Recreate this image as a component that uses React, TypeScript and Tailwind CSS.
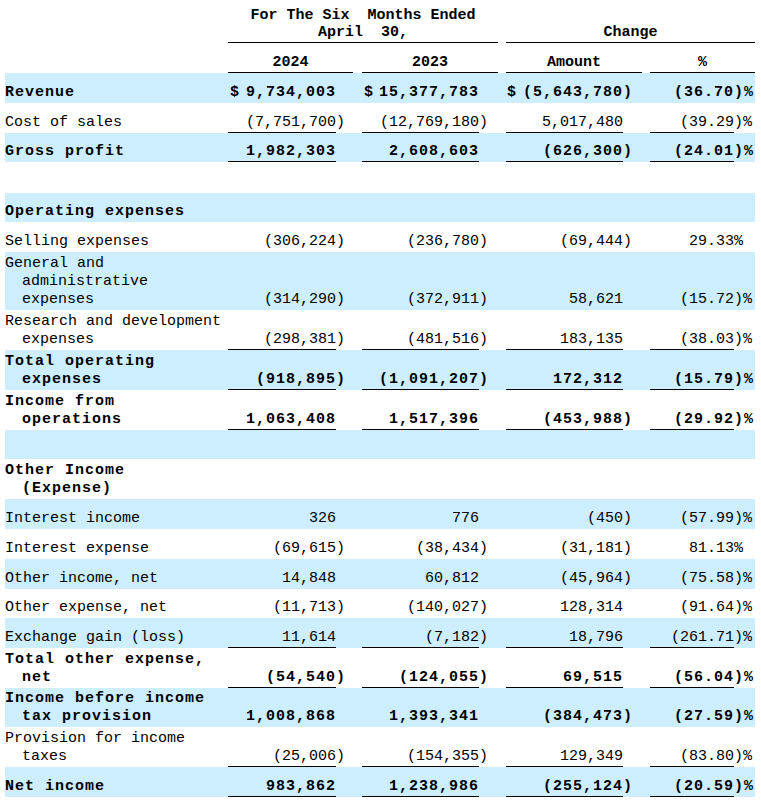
import React from "react";

type Row = {
  label: string[];
  h: string;
  bold?: boolean;
  blue?: boolean;
  line?: boolean;
  vals?: string[];
};

// label | 2024 | ) | gap | 2023 | ) | gap | amount | ) | gap | % | )%
const cols =
  "grid grid-cols-[223px_108px_17px_9px_117px_19px_8px_117px_19px_8px_84px_21px]";

const rows: Row[] = [
  { label: ["Revenue"], h: "h-[30px]", bold: true, blue: true, vals: ["$ 9,734,003", "$ 15,377,783", "$ (5,643,780)", "(36.70)%"] },
  { label: ["Cost of sales"], h: "h-[30px]", line: true, vals: ["(7,751,700)", "(12,769,180)", "5,017,480", "(39.29)%"] },
  { label: ["Gross profit"], h: "h-[29px]", bold: true, blue: true, line: true, vals: ["1,982,303", "2,608,603", "(626,300)", "(24.01)%"] },
  { label: [""], h: "h-[31px]" },
  { label: ["Operating expenses"], h: "h-[29px]", bold: true, blue: true },
  { label: ["Selling expenses"], h: "h-[30px]", vals: ["(306,224)", "(236,780)", "(69,444)", "29.33%"] },
  { label: ["General and", "administrative", "expenses"], h: "h-[58px]", blue: true, vals: ["(314,290)", "(372,911)", "58,621", "(15.72)%"] },
  { label: ["Research and development", "expenses"], h: "h-[40px]", line: true, vals: ["(298,381)", "(481,516)", "183,135", "(38.03)%"] },
  { label: ["Total operating", "expenses"], h: "h-[40px]", bold: true, blue: true, line: true, vals: ["(918,895)", "(1,091,207)", "172,312", "(15.79)%"] },
  { label: ["Income from", "operations"], h: "h-[40px]", bold: true, line: true, vals: ["1,063,408", "1,517,396", "(453,988)", "(29.92)%"] },
  { label: [""], h: "h-[29px]", blue: true },
  { label: ["Other Income", "(Expense)"], h: "h-[40px]", bold: true },
  { label: ["Interest income"], h: "h-[30px]", blue: true, vals: ["326", "776", "(450)", "(57.99)%"] },
  { label: ["Interest expense"], h: "h-[30px]", vals: ["(69,615)", "(38,434)", "(31,181)", "81.13%"] },
  { label: ["Other income, net"], h: "h-[30px]", blue: true, vals: ["14,848", "60,812", "(45,964)", "(75.58)%"] },
  { label: ["Other expense, net"], h: "h-[29px]", vals: ["(11,713)", "(140,027)", "128,314", "(91.64)%"] },
  { label: ["Exchange gain (loss)"], h: "h-[30px]", blue: true, line: true, vals: ["11,614", "(7,182)", "18,796", "(261.71)%"] },
  { label: ["Total other expense,", "net"], h: "h-[40px]", bold: true, line: true, vals: ["(54,540)", "(124,055)", "69,515", "(56.04)%"] },
  { label: ["Income before income", "tax provision"], h: "h-[39px]", bold: true, blue: true, vals: ["1,008,868", "1,393,341", "(384,473)", "(27.59)%"] },
  { label: ["Provision for income", "taxes"], h: "h-[40px]", line: true, vals: ["(25,006)", "(154,355)", "129,349", "(83.80)%"] },
  { label: ["Net income"], h: "h-[30px]", bold: true, blue: true, line: true, vals: ["983,862", "1,238,986", "(255,124)", "(20.59)%"] },
];

function split(v: string) {
  let dollar = false;
  let s = v;
  if (s.startsWith("$ ")) {
    dollar = true;
    s = s.slice(2);
  }
  const m = s.match(/^(.*?)(\)?%?)$/);
  return { dollar, main: m ? m[1] : s, suffix: m ? m[2] : "" };
}

function Value({ v, line, pad }: { v?: string; line?: boolean; pad: string }) {
  const p = v ? split(v) : null;
  return (
    <>
      <div
        className={`flex items-end justify-between border-b ${pad} ${
          line ? "border-black" : "border-transparent"
        }`}
      >
        <span>{p && p.dollar ? "$" : ""}</span>
        <span className="whitespace-pre">{p ? p.main : ""}</span>
      </div>
      <div className="flex items-end border-b border-transparent whitespace-pre">
        {p ? p.suffix : ""}
      </div>
    </>
  );
}

function TableRow({ row }: { row: Row }) {
  const v = row.vals || [];
  return (
    <div
      className={`${cols} ${row.h} ${row.blue ? "bg-[#cceeff]" : "bg-white"} ${
        row.bold ? "font-bold tracking-[1px]" : ""
      }`}
    >
      <div className="flex flex-col justify-end border-b border-transparent">
        {row.label.map((l, i) => (
          <div key={i} className={`whitespace-pre ${i > 0 ? "pl-[17px]" : ""}`}>
            {l}
          </div>
        ))}
      </div>
      <Value v={v[0]} line={row.line} pad="pl-[2px]" />
      <div className="border-b border-transparent" />
      <Value v={v[1]} line={row.line} pad="pl-[2px]" />
      <div className="border-b border-transparent" />
      <Value v={v[2]} line={row.line} pad="pl-[1px]" />
      <div className="border-b border-transparent" />
      <Value v={v[3]} line={row.line} pad="pl-0" />
    </div>
  );
}

export default function App() {
  return (
    <div className="min-h-screen bg-white pl-[5px] text-[15px] leading-[18px] text-black font-[family-name:'Liberation_Mono',monospace]">
      <div className="w-[750px]">
        {/* column headers */}
        <div className={`${cols} h-[43px] font-bold`}>
          <div />
          <div className="col-span-5 flex flex-col items-center justify-end border-b border-black pb-[1px] leading-[17px] whitespace-pre">
            <div>For The Six  Months Ended</div>
            <div>April  30,</div>
          </div>
          <div />
          <div className="col-span-5 flex items-end justify-center border-b border-black pb-[1px] leading-[17px]">
            Change
          </div>
        </div>
        <div className={`${cols} h-[30px] font-bold`}>
          <div />
          <div className="col-span-2 flex items-end justify-center border-b border-black">2024</div>
          <div />
          <div className="col-span-2 flex items-end justify-center border-b border-black">2023</div>
          <div />
          <div className="col-span-2 flex items-end justify-center border-b border-black">Amount</div>
          <div />
          <div className="col-span-2 flex items-end justify-center border-b border-black">%</div>
        </div>

        {rows.map((r, i) => (
          <TableRow key={i} row={r} />
        ))}
      </div>
    </div>
  );
}
